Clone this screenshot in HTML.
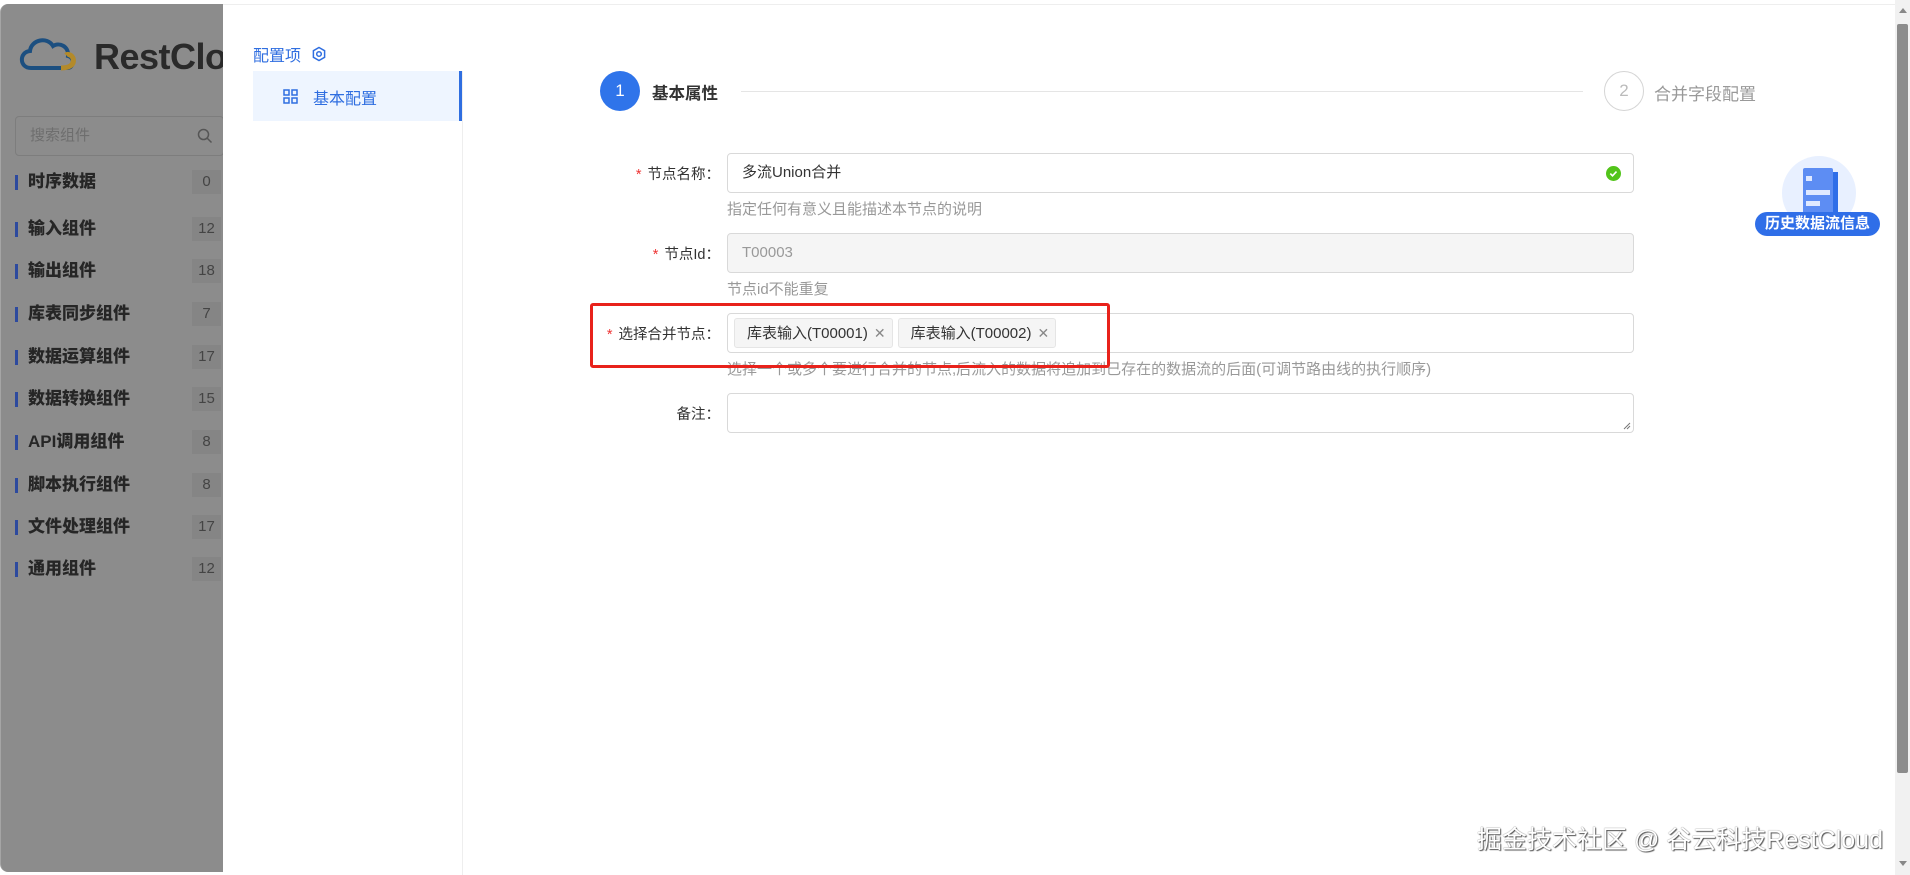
<!DOCTYPE html>
<html><head><meta charset="utf-8"><style>
*{box-sizing:border-box;margin:0;padding:0}
body{width:1910px;height:875px;overflow:hidden;background:#fff;font-family:"Liberation Sans","Noto Sans CJK SC",sans-serif;position:relative}
.side{position:absolute;left:0;top:4px;width:223px;height:868px;background:#8c8c8c;border-radius:8px 0 0 8px;border-left:1px solid #a5a5a5}
.logo{position:absolute;left:16px;top:28px}
.logo span{position:absolute;left:77px;top:4px;font-size:36px;font-weight:bold;color:#2a2a2a;letter-spacing:-0.5px;white-space:nowrap}
.search{position:absolute;left:14px;top:112px;width:209px;height:40px;border:1px solid #7d7d7d;border-radius:4px;background:#8c8c8c;color:#6e6e6e;font-size:15px;line-height:38px;padding-left:14px}
.item{position:absolute;left:14px;font-size:17px;font-weight:bold;color:#262626;line-height:20px}
.item:before{content:"";position:absolute;left:0;top:3px;width:3px;height:15px;background:#2d4a9e}
.item b{padding-left:13px}
.badge{position:absolute;left:191px;width:29px;height:24px;background:#858585;color:#444;font-size:15px;text-align:center;line-height:24px}
.panel{position:absolute;left:223px;top:4px;right:0;bottom:0;background:#fff;border-top:1px solid #eee}
.txt{position:absolute;white-space:nowrap}
.lbl{position:absolute;font-size:14.5px;color:#333;text-align:right;width:300px;white-space:nowrap}
.lbl i{color:#e33;font-style:normal;margin-right:6px}
.inp{position:absolute;left:727px;width:907px;height:40px;border:1px solid #d9d9d9;border-radius:4px;background:#fff;font-size:15px;color:#333;line-height:38px;padding-left:14px}
.help{position:absolute;left:727px;font-size:15px;color:#999;white-space:nowrap}
.tag{display:inline-block;height:30px;line-height:28px;border:1px solid #e5e5e5;background:#f5f5f5;border-radius:3px;padding:0 6px 0 12px;font-size:15px;color:#333;margin-right:5px;vertical-align:top;margin-top:4px}
.tag span{color:#888;margin-left:6px;font-size:14px}
</style></head><body>
<div class="side">
 <div class="logo">
  <svg width="70" height="42" viewBox="0 0 70 42"><path d="M14 36 C2 36 2 20 13 19 C14 8 30 4 36 14 C42 10 52 14 51 24 C58 26 57 36 50 36 Z" fill="none" stroke="#1c4f80" stroke-width="4"/><path d="M44 36 C52 36 58 33 56 26 C54 22 50 22 49 23" fill="none" stroke="#b38a2a" stroke-width="5"/></svg>
  <span>RestClo</span>
 </div>
 <div class="search">搜索组件<svg style="position:absolute;left:181px;top:11px" width="16" height="16" viewBox="0 0 16 16"><circle cx="6.5" cy="6.5" r="5" fill="none" stroke="#555" stroke-width="1.5"/><path d="M10 10l4.5 4.5" stroke="#555" stroke-width="1.5"/></svg></div>
 <div class="item" style="top:168px"><b>时序数据</b></div><div class="badge" style="top:166px">0</div>
 <div class="item" style="top:215px"><b>输入组件</b></div><div class="badge" style="top:213px">12</div>
 <div class="item" style="top:257px"><b>输出组件</b></div><div class="badge" style="top:255px">18</div>
 <div class="item" style="top:300px"><b>库表同步组件</b></div><div class="badge" style="top:298px">7</div>
 <div class="item" style="top:343px"><b>数据运算组件</b></div><div class="badge" style="top:341px">17</div>
 <div class="item" style="top:385px"><b>数据转换组件</b></div><div class="badge" style="top:383px">15</div>
 <div class="item" style="top:428px"><b>API调用组件</b></div><div class="badge" style="top:426px">8</div>
 <div class="item" style="top:471px"><b>脚本执行组件</b></div><div class="badge" style="top:469px">8</div>
 <div class="item" style="top:513px"><b>文件处理组件</b></div><div class="badge" style="top:511px">17</div>
 <div class="item" style="top:555px"><b>通用组件</b></div><div class="badge" style="top:553px">12</div>
</div>
<div class="panel"></div>
<div class="txt" style="left:253px;top:42px;font-size:16px;color:#2f6ee0">配置项</div>
<svg style="position:absolute;left:311px;top:46px" width="16" height="16" viewBox="0 0 16 16"><path d="M8 1.5l5.6 3.2v6.6L8 14.5 2.4 11.3V4.7z" fill="none" stroke="#2f6ee0" stroke-width="1.5"/><circle cx="8" cy="8" r="2.3" fill="none" stroke="#2f6ee0" stroke-width="1.5"/></svg>
<div style="position:absolute;left:253px;top:71px;width:209px;height:50px;background:#eef5ff;border-right:3px solid #2f6ee0"></div>
<svg style="position:absolute;left:283px;top:89px" width="15" height="15" viewBox="0 0 15 15" fill="none" stroke="#2f6ee0" stroke-width="1.5"><rect x="1" y="1" width="5" height="5"/><rect x="9" y="1" width="5" height="5"/><rect x="1" y="9" width="5" height="5"/><rect x="9" y="9" width="5" height="5"/></svg>
<div class="txt" style="left:313px;top:85px;font-size:16px;color:#2f6ee0">基本配置</div>
<div style="position:absolute;left:462px;top:71px;width:1px;height:804px;background:#eee"></div>
<div style="position:absolute;left:600px;top:71px;width:40px;height:40px;border-radius:50%;background:#2f74ea;color:#fff;font-size:17px;text-align:center;line-height:40px">1</div>
<div class="txt" style="left:652px;top:80px;font-size:16.5px;font-weight:bold;color:#333">基本属性</div>
<div style="position:absolute;left:741px;top:91px;width:842px;height:1px;background:#e5e5e5"></div>
<div style="position:absolute;left:1604px;top:71px;width:40px;height:40px;border-radius:50%;border:1px solid #d5d5d5;color:#bbb;font-size:17px;text-align:center;line-height:38px">2</div>
<div class="txt" style="left:1654px;top:80px;font-size:17px;color:#999">合并字段配置</div>
<div class="lbl" style="left:420px;top:163px"><i>*</i>节点名称：</div>
<div class="inp" style="top:153px">多流Union合并<svg style="position:absolute;right:12px;top:12px" width="15" height="15" viewBox="0 0 15 15"><circle cx="7.5" cy="7.5" r="7.5" fill="#52c41a"/><path d="M4.3 7.6l2.2 2.2 4-4.2" fill="none" stroke="#fff" stroke-width="1.6"/></svg></div>
<div class="help" style="top:198px">指定任何有意义且能描述本节点的说明</div>
<div class="lbl" style="left:420px;top:243px"><i>*</i>节点Id：</div>
<div class="inp" style="top:233px;background:#f5f5f5;color:#999">T00003</div>
<div class="help" style="top:278px">节点id不能重复</div>
<div class="lbl" style="left:420px;top:323px"><i>*</i>选择合并节点：</div>
<div class="inp" style="top:313px;padding-left:6px;line-height:normal"><span class="tag">库表输入(T00001)<span>✕</span></span><span class="tag">库表输入(T00002)<span>✕</span></span></div>
<div class="help" style="top:358px">选择一个或多个要进行合并的节点,后流入的数据将追加到已存在的数据流的后面(可调节路由线的执行顺序)</div>
<div style="position:absolute;left:590px;top:303px;width:520px;height:65px;border:3px solid #e8221b;border-radius:3px"></div>
<div class="lbl" style="left:420px;top:403px">备注：</div>
<div class="inp" style="top:393px;height:40px"><svg style="position:absolute;right:2px;bottom:2px" width="8" height="8" viewBox="0 0 8 8"><path d="M7 1L1 7M7 4L4 7" stroke="#777"/></svg></div>
<div style="position:absolute;left:1782px;top:156px;width:74px;height:74px;border-radius:50%;background:#e8f0ff"></div>
<div style="position:absolute;left:1803px;top:168px;width:30px;height:46px;background:#5d8df3;border-radius:2px"></div>
<div style="position:absolute;left:1833px;top:172px;width:5px;height:42px;background:#2f6ee8"></div>
<div style="position:absolute;left:1806px;top:176px;width:6px;height:5px;background:#dfe9ff"></div>
<div style="position:absolute;left:1806px;top:190px;width:24px;height:5px;background:#dfe9ff"></div>
<div style="position:absolute;left:1806px;top:201px;width:14px;height:5px;background:#dfe9ff"></div>
<div style="position:absolute;left:1755px;top:212px;width:125px;height:24px;border-radius:12px;background:#2f6ee8;color:#fff;font-size:15px;text-align:center;line-height:24px;font-weight:bold">历史数据流信息</div>
<div style="position:absolute;left:1895px;top:0;width:15px;height:875px;background:#f1f1f1"></div>
<div style="position:absolute;left:1897px;top:24px;width:11px;height:749px;background:#8c8c8c;border-radius:2px"></div>
<div style="position:absolute;left:1899px;top:861px;width:0;height:0;border-left:4px solid transparent;border-right:4px solid transparent;border-top:5px solid #888"></div>
<div style="position:absolute;left:1899px;top:8px;width:0;height:0;border-left:4px solid transparent;border-right:4px solid transparent;border-bottom:5px solid #888"></div>
<div class="txt" style="left:1477px;top:820px;font-size:25px;color:#fff;text-shadow:1px 1px 1px #555,0 0 1px #555">掘金技术社区 @ 谷云科技RestCloud</div>
</body></html>
